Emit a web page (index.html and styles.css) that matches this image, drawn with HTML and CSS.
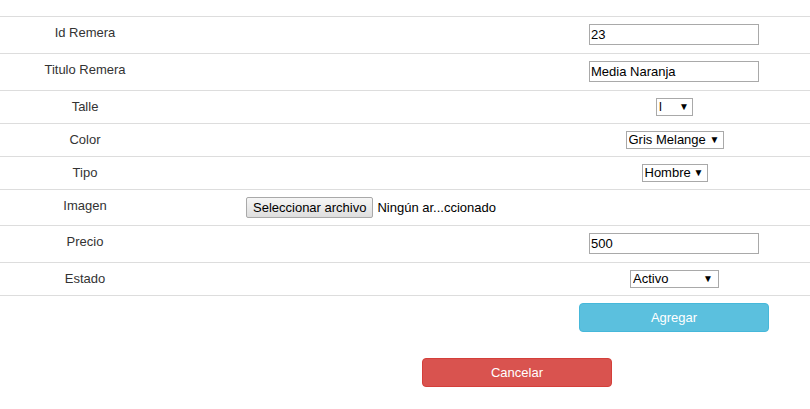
FILE: index.html
```html
<!DOCTYPE html>
<html lang="es">
<head>
<meta charset="utf-8">
<title>Agregar Remera</title>
<link rel="stylesheet" href="styles.css">
</head>
<body>
<div class="page">
  <div class="form-table">
    <div class="row row-tall">
      <div class="label">Id Remera</div>
      <div class="mid"></div>
      <div class="field"><input class="text" type="text" value="23"></div>
    </div>
    <div class="row row-tall">
      <div class="label">Titulo Remera</div>
      <div class="mid"></div>
      <div class="field"><input class="text" type="text" value="Media Naranja"></div>
    </div>
    <div class="row row-sel">
      <div class="label">Talle</div>
      <div class="mid"></div>
      <div class="field"><span class="sel sel-talle"><select><option>l</option></select><span class="arrow">&#9660;</span></span></div>
    </div>
    <div class="row row-sel">
      <div class="label">Color</div>
      <div class="mid"></div>
      <div class="field"><span class="sel sel-color"><select><option>Gris Melange</option></select><span class="arrow">&#9660;</span></span></div>
    </div>
    <div class="row row-sel">
      <div class="label">Tipo</div>
      <div class="mid"></div>
      <div class="field"><span class="sel sel-tipo"><select><option>Hombre</option></select><span class="arrow">&#9660;</span></span></div>
    </div>
    <div class="row row-file">
      <div class="label">Imagen</div>
      <div class="mid file"><button class="file-btn" type="button">Seleccionar archivo</button><span class="file-name">Ningún ar...ccionado</span></div>
      <div class="field"></div>
    </div>
    <div class="row row-tall">
      <div class="label">Precio</div>
      <div class="mid"></div>
      <div class="field"><input class="text" type="text" value="500"></div>
    </div>
    <div class="row row-sel last">
      <div class="label">Estado</div>
      <div class="mid"></div>
      <div class="field"><span class="sel sel-estado"><select><option>Activo</option></select><span class="arrow">&#9660;</span></span></div>
    </div>
  </div>
  <div class="actions">
    <button class="btn btn-info" type="button">Agregar</button>
  </div>
  <div class="actions-cancel">
    <button class="btn btn-danger" type="button">Cancelar</button>
  </div>
</div>
</body>
</html>
```
FILE: styles.css
```css
* { box-sizing: border-box; }
html, body { margin: 0; padding: 0; background: #fff; }
body {
  font-family: "Liberation Sans", Arial, sans-serif;
  font-size: 13px;
  color: #333;
}
.page { padding-top: 16px; width: 810px; }
.form-table { border-bottom: 1px solid #ddd; }
.row {
  display: grid;
  grid-template-columns: 170px 369px 271px;
  border-top: 1px solid #ddd;
}
.row-tall { height: 37px; }
.row-sel { height: 33px; }
.row-file { height: 36px; }
.label {
  text-align: center;
  padding-top: 7px;
  line-height: 17px;
}
.field {
  text-align: center;
  padding-top: 7px;
  line-height: 0;
}
.text {
  width: 170px;
  height: 21px;
  margin: 0 0 0 -1px;
  padding: 1px 1px;
  border: 1px solid #a9a9a9;
  font-family: "Liberation Sans", Arial, sans-serif;
  font-size: 13px;
  color: #000;
  background: #fff;
  outline: none;
}
.sel {
  position: relative;
  display: inline-block;
  height: 18px;
  vertical-align: top;
}
.sel select {
  -webkit-appearance: none;
  appearance: none;
  height: 18px;
  margin: 0;
  padding: 0 0 0 2px;
  border: 1px solid #a9a9a9;
  border-radius: 0;
  background: #fff;
  font-family: "Liberation Sans", Arial, sans-serif;
  font-size: 13px;
  line-height: 16px;
  color: #000;
}
.sel .arrow {
  position: absolute;
  right: 4px;
  top: 4px;
  font-size: 10px;
  line-height: 10px;
  color: #000;
  pointer-events: none;
}
.sel-talle select { width: 37px; }
.sel-color select { width: 98px; }
.sel-tipo select { width: 66px; }
.sel-estado select { width: 89px; }
.sel-estado .arrow { right: 6px; }
.file {
  padding: 7px 0 0 76px;
  display: flex;
  align-items: flex-start;
  gap: 4px;
}
.file-btn {
  height: 21px;
  margin: 0;
  padding: 0 6px;
  border: 1px solid #a9a9a9;
  border-radius: 2px;
  background: linear-gradient(#f6f6f6, #dedede);
  font-family: "Liberation Sans", Arial, sans-serif;
  font-size: 13px;
  color: #000;
}
.file-name {
  font-size: 13px;
  line-height: 21px;
  color: #000;
}
.actions {
  display: flex;
  justify-content: flex-end;
  padding: 7px 41px 0 0;
}
.actions-cancel {
  display: flex;
  padding: 26px 0 0 422px;
}
.btn {
  width: 190px;
  height: 29px;
  border-radius: 4px;
  font-family: "Liberation Sans", Arial, sans-serif;
  font-size: 13px;
  color: #fff;
  padding: 0;
}
.btn-info { background: #5bc0de; border: 1px solid #46b8da; }
.btn-danger { background: #d9534f; border: 1px solid #d43f3a; }
```
